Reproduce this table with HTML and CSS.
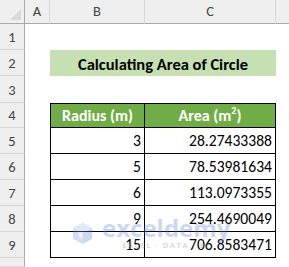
FILE: index.html
```html
<!DOCTYPE html>
<html>
<head>
<meta charset="utf-8">
<link rel="stylesheet" href="styles.css">
</head>
<body>
<div class="sheet">
  <div class="corner"><div class="tri"></div></div>
  <div class="ch">A</div>
  <div class="ch">B</div>
  <div class="ch">C</div>
  <div class="ch last"></div>

  <div class="rh">1</div><div class="c"></div><div class="c"></div><div class="c"></div><div class="c"></div>
  <div class="rh">2</div><div class="c"></div><div class="c title span2">Calculating Area of Circle</div><div class="c"></div>
  <div class="rh">3</div><div class="c"></div><div class="c"></div><div class="c"></div><div class="c"></div>
  <div class="rh">4</div><div class="c"></div><div class="c th tl"><span>Radius (m)</span></div><div class="c th"><span>Area (m<sup>2</sup>)</span></div><div class="c"></div>
  <div class="rh">5</div><div class="c"></div><div class="c td tl">3</div><div class="c td">28.27433388</div><div class="c"></div>
  <div class="rh">6</div><div class="c"></div><div class="c td tl">5</div><div class="c td">78.53981634</div><div class="c"></div>
  <div class="rh">7</div><div class="c"></div><div class="c td tl">6</div><div class="c td">113.0973355</div><div class="c"></div>
  <div class="rh">8</div><div class="c"></div><div class="c td tl">9</div><div class="c td">254.4690049</div><div class="c"></div>
  <div class="rh">9</div><div class="c"></div><div class="c td tl">15</div><div class="c td">706.8583471</div><div class="c"></div>
  <div class="rh"></div><div class="c"></div><div class="c"></div><div class="c"></div><div class="c"></div>

  <div class="wm">
    <svg class="wm-icon" width="21" height="23" viewBox="0 0 22 24">
      <polygon points="11,1 21,6.5 21,17.5 11,23 1,17.5 1,6.5" fill="#6f95e0"/>
      <polygon points="11,1 21,6.5 11,12 1,6.5" fill="#9db6ec"/>
      <polygon points="11,12 21,6.5 21,17.5 11,23" fill="#5a82d6"/>
      <polygon points="7,10 11,12 11,17 7,15" fill="#ffffff" opacity="0.7"/>
    </svg>
    <div class="wm-text">
      <div class="wm-name">exceldemy</div>
      <div class="wm-sub">EXCEL · DATA · BI</div>
    </div>
  </div>
</div>
</body>
</html>
```
FILE: styles.css
```css
* { box-sizing: border-box; margin: 0; padding: 0; }
html, body { background: #ffffff; }
body { margin: 0; overflow: hidden; width: 289px; height: 267px; }

.sheet {
  position: relative;
  display: grid;
  grid-template-columns: 25px 25px 95px 131px 13px;
  grid-template-rows: 24px 26px 26px 27px 25px 26px 26px 26px 26px 26px 9px;
  width: 289px;
  height: 267px;
  font-family: Carlito, Lato, "Liberation Sans", sans-serif;
}

.corner {
  position: relative;
  background: #efefef;
  border-right: 1px solid #ababab;
  border-bottom: 1px solid #ababab;
}
.tri {
  position: absolute;
  right: 3px;
  bottom: 3px;
  width: 0;
  height: 0;
  border-left: 11px solid transparent;
  border-bottom: 11px solid #dadada;
}

.ch {
  background: #efefef;
  border-bottom: 1px solid #ababab;
  border-right: 1px solid #d8d8d8;
  color: #444444;
  font-size: 14.5px;
  display: flex;
  align-items: flex-end;
  justify-content: center;
  padding-bottom: 3px;
}
.ch.last { border-right: none; }

.rh {
  background: #efefef;
  border-right: 1px solid #ababab;
  border-bottom: 1px solid #d8d8d8;
  color: #444444;
  font-size: 14.5px;
  display: flex;
  align-items: flex-end;
  justify-content: center;
  padding-bottom: 3px;
}

.c { background: #ffffff; }

.title {
  grid-column: span 2;
  background: #c6e0b4;
  font-weight: bold;
  font-size: 16.5px;
  color: #000000;
  display: flex;
  align-items: center;
  justify-content: center;
  padding-top: 1px;
}

.th {
  background: #70ad47;
  color: #ffffff;
  font-weight: bold;
  font-size: 16px;
  display: flex;
  align-items: flex-end;
  justify-content: center;
  padding-bottom: 2px;
  border-top: 1px solid #000;
  border-right: 1px solid #000;
  border-bottom: 1px solid #000;
}
.th sup { font-size: 10px; line-height: 0; vertical-align: 0; position: relative; top: -7px; }

.td {
  color: #000000;
  font-size: 15.6px;
  display: flex;
  align-items: flex-end;
  justify-content: flex-end;
  padding-right: 3px;
  padding-bottom: 3px;
  border-right: 1px solid #000;
  border-bottom: 1px solid #000;
}
.tl { border-left: 1px solid #000; }

.wm {
  position: absolute;
  left: 72px;
  top: 217px;
  display: flex;
  align-items: center;
  gap: 9px;
  opacity: 0.3;
  pointer-events: none;
}
.wm-text { display: flex; flex-direction: column; align-items: center; }
.wm-name {
  font-family: "Open Sans", sans-serif;
  font-weight: bold;
  font-size: 24px;
  line-height: 22px;
  color: #5a82d6;
}
.wm-sub {
  font-family: "Open Sans", sans-serif;
  font-size: 7.5px;
  font-weight: bold;
  letter-spacing: 1.5px;
  color: #8a8a8a;
  margin-top: 1px;
}
```
